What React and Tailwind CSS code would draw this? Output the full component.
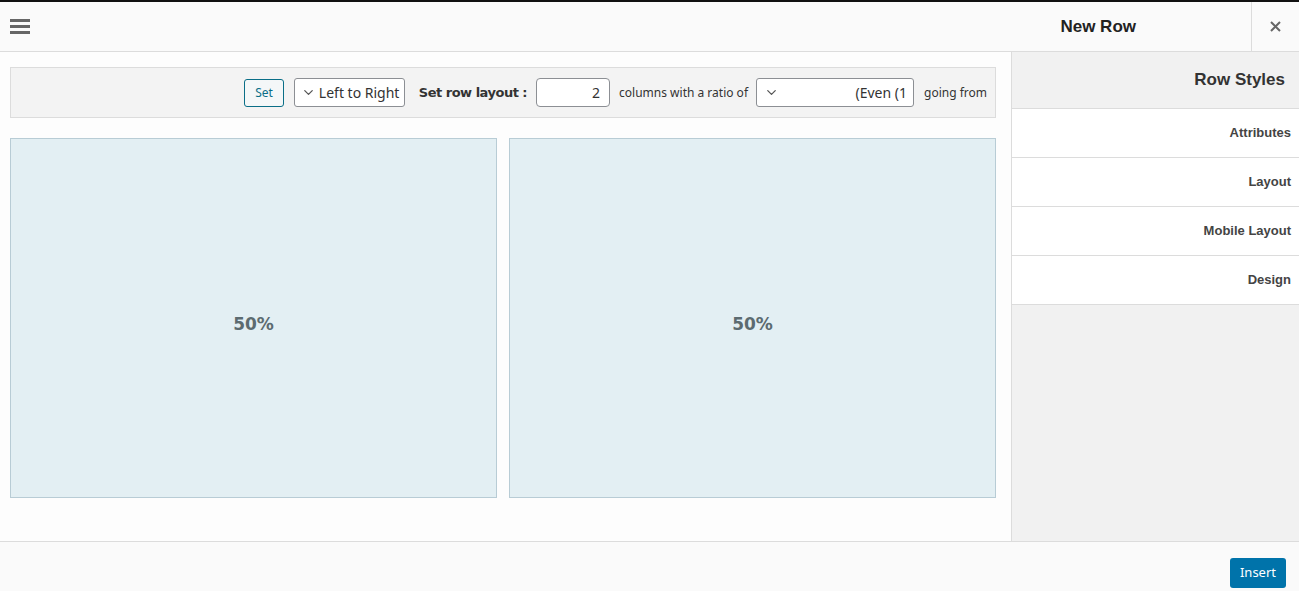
import { ChevronDown } from "lucide-react";

const tabs = ["Attributes", "Layout", "Mobile Layout", "Design"];

export default function App() {
  return (
    <div className="h-[591px] w-full flex flex-col border-t-2 border-[#111] bg-[#fdfdfd] overflow-hidden">
      {/* header */}
      <div className="h-[50px] flex items-stretch bg-[#fafafa] border-b border-[#dcdcdc] shrink-0">
        <div className="flex items-center pl-[10px]">
          <div className="w-[20px] flex flex-col gap-[3px]">
            <span className="h-[3px] bg-[#666]"></span>
            <span className="h-[3px] bg-[#666]"></span>
            <span className="h-[3px] bg-[#666]"></span>
          </div>
        </div>
        <div className="flex-1 flex items-center justify-end pr-[115px]">
          <h1 className="text-[17px] font-bold text-[#222] font-['Liberation_Sans',Arial,sans-serif]">
            New Row
          </h1>
        </div>
        <button className="w-[48px] border-l border-[#dcdcdc] flex items-center justify-center text-[#666]">
          <svg width="11" height="11" viewBox="0 0 11 11">
            <path d="M1 1L10 10M10 1L1 10" stroke="#666" strokeWidth="2" />
          </svg>
        </button>
      </div>

      {/* body */}
      <div className="flex-1 flex min-h-0">
        <div className="flex-1 pl-[10px] pr-[15px] pt-[15px] font-['Noto_Sans',sans-serif]">
          <div className="h-[51px] bg-[#f3f3f3] border border-[#dcdcdc] flex items-center justify-end pr-[8px] text-[#333]">
            <button className="h-[28px] px-[10px] rounded-[3px] border border-[#0a6e87] bg-[#f4f7f8] text-[12px] text-[#0a6e87]">
              Set
            </button>
            <div className="ml-[10px] h-[29px] w-[111px] bg-white border border-[#8c8f94] rounded-[3px] flex items-center pl-[6px] gap-[3px] text-[14px] text-[#333]">
              <ChevronDown size={15} strokeWidth={2} className="text-[#555]" />
              Left to Right
            </div>
            <span className="ml-[14px] text-[13px] font-bold text-[#333] font-['DejaVu_Sans',sans-serif] tracking-[-0.5px]">
              Set row layout :
            </span>
            <div className="ml-[9px] h-[29px] w-[74px] bg-white border border-[#8c8f94] rounded-[4px] flex items-center justify-end pr-[9px] text-[14px] text-[#333]">
              2
            </div>
            <span className="ml-[9px] text-[12px] text-[#333]">columns with a ratio of</span>
            <div className="ml-[8px] h-[29px] w-[158px] bg-white border border-[#8c8f94] rounded-[3px] flex items-center pl-[7px] pr-[6px] text-[14px] text-[#333]">
              <ChevronDown size={15} strokeWidth={2} className="text-[#555]" />
              <span className="ml-auto">(Even (1</span>
            </div>
            <span className="ml-[10px] text-[12px] text-[#333]">going from</span>
          </div>

          <div className="mt-[20px] grid grid-cols-2 gap-[12px] h-[360px] font-['DejaVu_Sans',sans-serif]">
            <div className="bg-[#e3eff3] border border-[#b8ccd5] flex items-center justify-center pt-[14px]">
              <span className="text-[17px] font-bold text-[#5c6b70]">50%</span>
            </div>
            <div className="bg-[#e3eff3] border border-[#b8ccd5] flex items-center justify-center pt-[14px]">
              <span className="text-[17px] font-bold text-[#5c6b70]">50%</span>
            </div>
          </div>
        </div>

        {/* sidebar */}
        <div className="w-[288px] shrink-0 bg-[#f1f1f1] border-l border-[#dcdcdc] font-['Liberation_Sans',Arial,sans-serif]">
          <div className="h-[57px] flex items-center justify-end pr-[14px] border-b border-[#dcdcdc]">
            <span className="text-[17px] font-bold text-[#333]">Row Styles</span>
          </div>
          {tabs.map((t) => (
            <div
              key={t}
              className="h-[49px] bg-white border-b border-[#dcdcdc] flex items-center justify-end pr-[8px]"
            >
              <span className="text-[13px] font-bold text-[#444]">{t}</span>
            </div>
          ))}
        </div>
      </div>

      {/* footer */}
      <div className="h-[50px] shrink-0 border-t border-[#dcdcdc] bg-[#fafafa] flex items-center justify-end pr-[13px] pt-[2px]">
        <button className="h-[30px] px-[10px] rounded-[3px] bg-[#0073aa] text-white text-[13px] font-['Noto_Sans',sans-serif] mt-[10px]">
          Insert
        </button>
      </div>
    </div>
  );
}
